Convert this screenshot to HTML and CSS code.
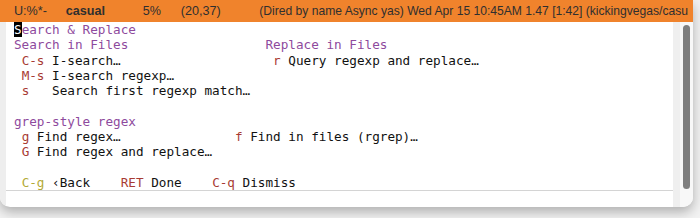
FILE: index.html
```html
<!DOCTYPE html>
<html>
<head>
<meta charset="utf-8">
<link rel="stylesheet" href="styles.css">
</head>
<body>
<div class="window">
  <div class="modeline">
    <span class="ml a">U:%*-</span>
    <span class="ml b">casual</span>
    <span class="ml c">5%</span>
    <span class="ml d">(20,37)</span>
    <span class="ml e">(Dired by name Async yas) Wed Apr 15 10:45AM 1.47 [1:42] (kickingvegas/casu</span>
  </div>
  <div class="main">
    <div class="fringe-left"></div>
    <div class="center">
      <div class="buffer"><div class="line"><span class="h"><span class="cursor">S</span>earch &amp; Replace</span></div><div class="line"><span class="h">Search in Files</span>                  <span class="h">Replace in Files</span></div><div class="line"> <span class="k">C-s</span> I-search…                    <span class="k">r</span> Query regexp and replace…</div><div class="line"> <span class="k">M-s</span> I-search regexp…</div><div class="line"> <span class="k">s</span>   Search first regexp match…</div><div class="line"> </div><div class="line"><span class="h">grep-style regex</span></div><div class="line"> <span class="k">g</span> Find regex…               <span class="k">f</span> Find in files (rgrep)…</div><div class="line"> <span class="k">G</span> Find regex and replace…</div><div class="line"> </div><div class="line"> <span class="y">C-g</span> ‹Back    <span class="k">RET</span> Done    <span class="k">C-q</span> Dismiss</div></div>
      <div class="echo"></div>
    </div>
    <div class="fringe-right"></div>
    <div class="scrollbar"><div class="thumb"></div></div>
  </div>
</div>
</body>
</html>
```
FILE: styles.css
```css
html, body {
  margin: 0;
  padding: 0;
}
body {
  width: 700px;
  height: 218px;
  background: #f2f2f2;
  overflow: hidden;
}
.window {
  width: 693px;
  height: 207px;
  background: #ffffff;
  border-radius: 0 0 10px 10px;
  overflow: hidden;
  display: flex;
  flex-direction: column;
  box-shadow: 0 5px 12px rgba(0, 0, 0, 0.28);
}
.modeline {
  height: 22px;
  flex: none;
  background: #f0832c;
  display: flex;
  align-items: center;
  padding-left: 14px;
  font-family: "Liberation Sans", Arial, sans-serif;
  font-size: 12.6px;
  color: #2f2f2f;
  white-space: nowrap;
  overflow: hidden;
}
.ml { flex: none; }
.a { width: 51.7px; }
.b { width: 77px; font-weight: bold; }
.c { width: 38px; }
.d { width: 78.6px; }
.e { font-size: 12.1px; }
.main {
  flex: 1;
  display: flex;
  min-height: 0;
}
.fringe-left {
  width: 6px;
  background: #eeeeee;
  flex: none;
}
.center {
  flex: 1;
  display: flex;
  flex-direction: column;
}
.buffer {
  padding-left: 8px;
  border-bottom: 1px solid #d4d4d4;
  font-family: "DejaVu Sans Mono", monospace;
  font-size: 12.67px;
  line-height: 15.3px;
  color: #111111;
  white-space: pre;
  box-sizing: border-box;
  height: 169px;
}
.line { height: 15.3px; }
.h { color: #8e4a9d; }
.k { color: #a83b33; }
.y { color: #b3aa36; }
.cursor {
  background: #000000;
  color: #ffffff;
}
.echo { flex: 1; }
.fringe-right {
  width: 7px;
  background: #efefef;
  flex: none;
}
.scrollbar {
  width: 13px;
  flex: none;
  background: #f8f8f8;
  padding: 3px 0 0 3px;
  box-sizing: border-box;
}
.thumb {
  width: 7px;
  height: 164px;
  border-radius: 4px;
  background: #7f7f7f;
}
```
